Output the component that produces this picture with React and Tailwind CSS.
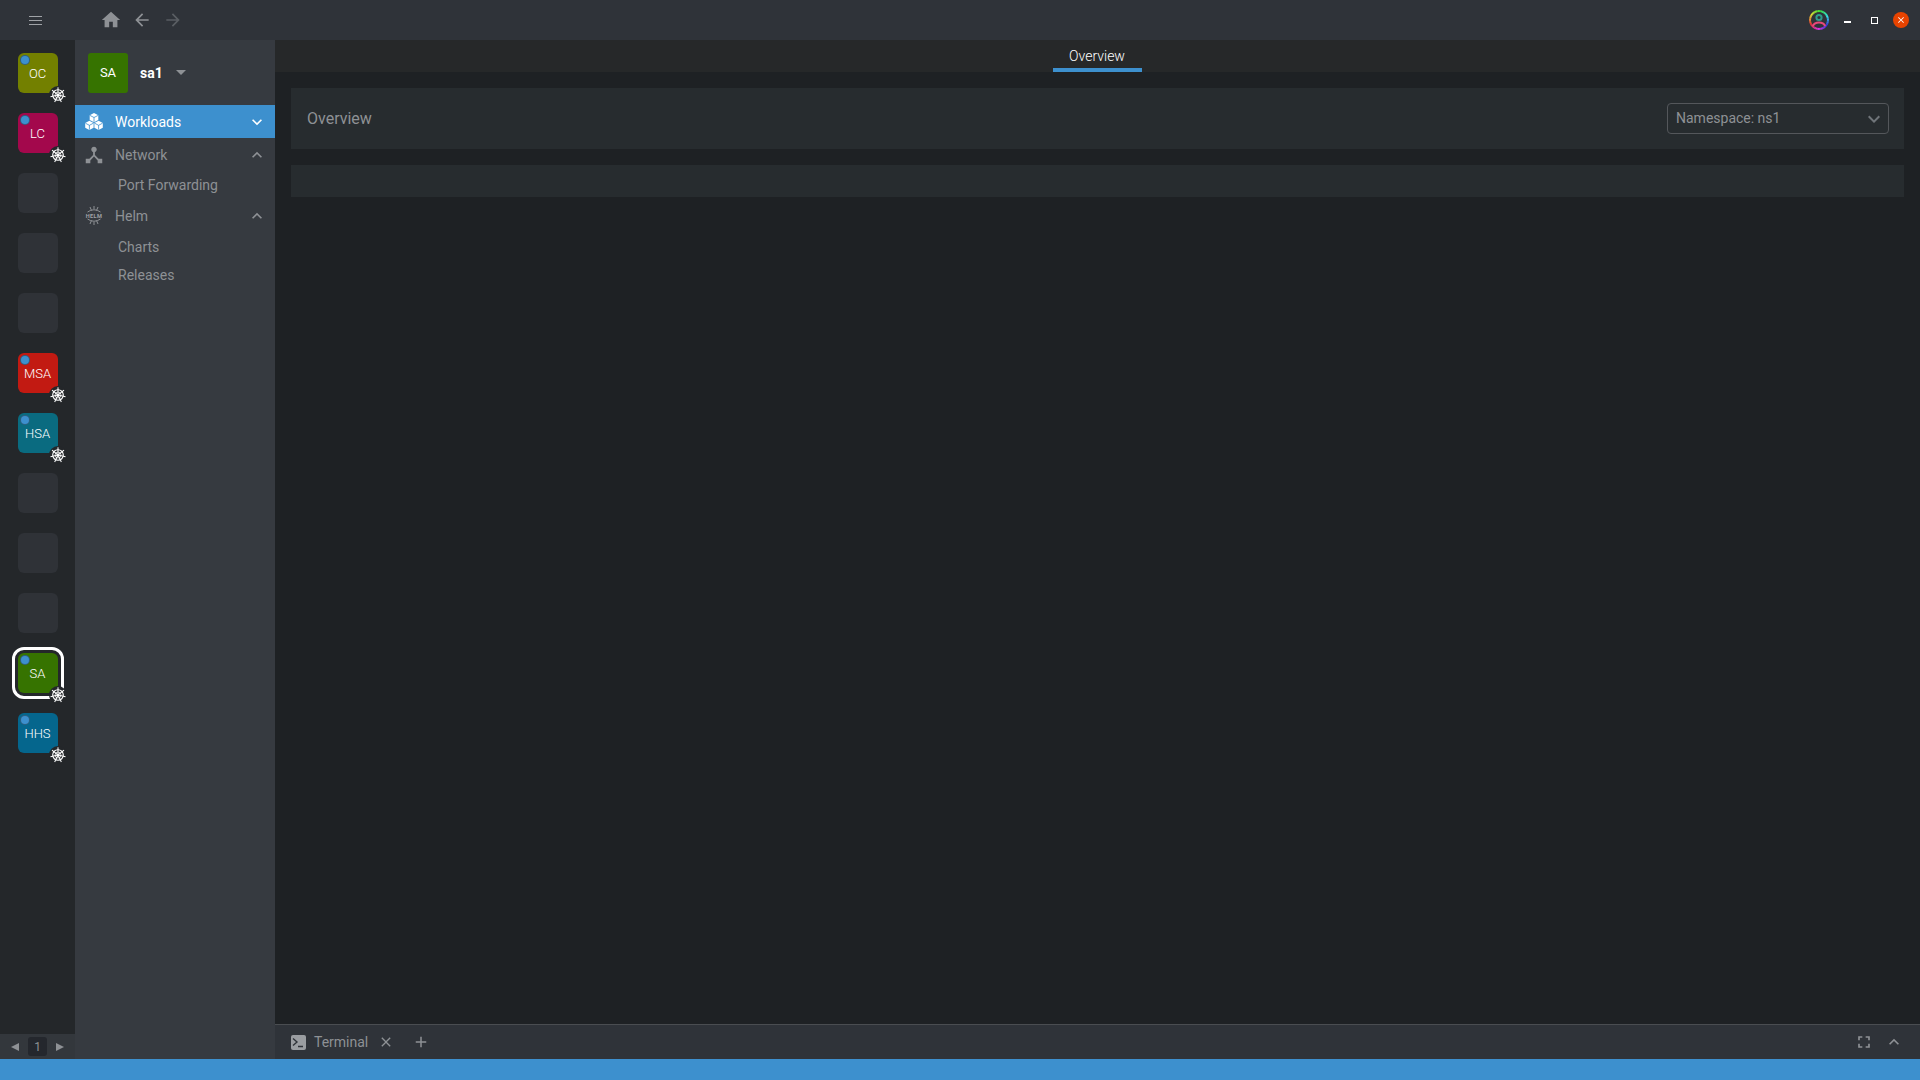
const icons = {
  home: "M10 20v-6h4v6h5v-8h3L12 3 2 12h3v8z",
  back: "M20 11H7.83l5.59-5.59L12 4l-8 8 8 8 1.41-1.41L7.83 13H20v-2z",
  forward: "M12 4l-1.41 1.41L16.17 11H4v2h12.17l-5.58 5.59L12 20l8-8z",
  more: "M16.59 8.59L12 13.17 7.41 8.59 6 10l6 6 6-6z",
  less: "M12 8l-6 6 1.41 1.41L12 10.83l4.59 4.58L18 14z",
  hub: "M17 16l-4-4V8.82C14.16 8.4 15 7.3 15 6c0-1.66-1.34-3-3-3S9 4.34 9 6c0 1.3.84 2.4 2 2.82V12l-4 4H3v5h5v-3.05l4-4.2 4 4.2V21h5v-5h-4z",
  full: "M7 14H5v5h5v-2H7v-3zm-2-4h2V7h3V5H5v5zm12 7h-3v2h5v-5h-2v3zM14 5v2h3v3h2V5h-5z",
  add: "M19 13h-6v6h-2v-6H5v-2h6V5h2v6h6v2z",
  close: "M19 6.41L17.59 5 12 10.59 6.41 5 5 6.41 10.59 12 5 17.59 6.41 19 12 13.41 17.59 19 19 17.59 13.41 12 19 6.41z",
};

function Icon({ name, className }) {
  return (
    <svg viewBox="0 0 24 24" fill="currentColor" className={className}>
      <path d={icons[name]} />
    </svg>
  );
}

function KubeIcon() {
  const spokes = [0, 51.4, 102.8, 154.2, 205.7, 257.1, 308.5];
  return (
    <svg viewBox="0 0 16 16" className="w-[16px] h-[16px]" fill="none" stroke="white">
      <circle cx="8" cy="8" r="5.3" strokeWidth="1.1" />
      <circle cx="8" cy="8" r="3" strokeWidth="0.7" />
      <circle cx="8" cy="8" r="1.1" fill="white" stroke="none" />
      {spokes.map((a) => (
        <line key={a} x1="8" y1="8" x2="8" y2="0.3" strokeWidth="1" transform={`rotate(${a} 8 8)`} />
      ))}
    </svg>
  );
}

function HotbarItem({ label, color, active }) {
  if (!label) {
    return <div className="w-[40px] h-[40px] rounded-[6px] bg-[#2f3237]" />;
  }
  return (
    <div
      className={`relative w-[40px] h-[40px] rounded-[6px] flex items-center justify-center pt-[1px] text-white text-[13px] font-light ${color} ${
        active ? "outline-[3px] outline-white outline-offset-[3px]" : ""
      }`}
    >
      <span className="absolute left-[3px] top-[3px] w-[8px] h-[8px] rounded-full bg-[#3d90ce] shadow-[0_0_0_1px_#2f5f80]" />
      {label}
      <span className="absolute right-[-9px] bottom-[-11px] w-[18px] h-[18px] rounded-full bg-[#24272a] flex items-center justify-center">
        <KubeIcon />
      </span>
    </div>
  );
}

function WorkloadsIcon() {
  return (
    <svg viewBox="0 0 18 17" className="w-[18px] h-[17px]" fill="white">
      <path d="M9 0l4.3 2.3v4.6L9 9.2 4.7 6.9V2.3z" />
      <path d="M4.4 7.8l4.2 2.3v4.6L4.4 17 .2 14.7v-4.6z" />
      <path d="M13.6 7.8l4.2 2.3v4.6L13.6 17l-4.2-2.3v-4.6z" />
      <path d="M9 4.3v4.6M4.9 2.4L9 4.5l4.1-2.1M4.4 12.1v4.6M.4 10.2l4 2.1 4-2.1M13.6 12.1v4.6M9.6 10.2l4 2.1 4-2.1" stroke="#3d90ce" strokeWidth="0.8" fill="none" />
    </svg>
  );
}

function HelmIcon() {
  return (
    <svg viewBox="0 0 20 20" className="w-[21px] h-[21px]" fill="none" stroke="#8e9195" strokeWidth="1">
      <path d="M3.5 6.5Q10 2 16.5 6.5M6 1.5l1.5 3.5M14 1.5l-1.5 3.5M10 .5v3" />
      <path d="M3.5 13.5Q10 18 16.5 13.5M6 18.5l1.5-3.5M14 18.5l-1.5-3.5M10 19.5v-3" />
      <text x="10" y="12" textAnchor="middle" fontSize="5.6" fontWeight="700" fill="#a0a3a7" stroke="none" letterSpacing="0.4" fontFamily="Roboto, sans-serif">HELM</text>
    </svg>
  );
}

function AvatarIcon() {
  const segments = Array.from({ length: 36 }, (_, i) => i * 10);
  const point = (angle) => {
    const rad = (angle * Math.PI) / 180;
    return `${10 + 9 * Math.sin(rad)} ${10 - 9 * Math.cos(rad)}`;
  };
  return (
    <svg viewBox="0 0 20 20" className="w-[20px] h-[20px]" fill="none">
      {segments.map((angle) => (
        <path
          key={angle}
          d={`M${point(angle)}L${point(angle + 11)}`}
          stroke={`hsl(${120 + angle} 75% 55%)`}
          strokeWidth="2"
        />
      ))}
      <circle cx="10" cy="7.5" r="2.6" stroke="#2f9c8c" strokeWidth="2" />
      <path d="M3.8 16q1.6-3.6 6.2-3.6t6.2 3.6" stroke="#e8487a" strokeWidth="2" />
    </svg>
  );
}

function MenuRow({ icon, label, active, chevron }) {
  return (
    <div className={`h-[33px] flex items-center pl-[9px] pr-[8px] text-[14px] ${active ? "bg-[#3d90ce] text-white" : "text-[#8e9195]"}`}>
      <span className="w-[20px] flex justify-center">{icon}</span>
      <span className="ml-[11px] flex-1 pt-[1px]">{label}</span>
      <Icon name={chevron} className="w-[20px] h-[20px]" />
    </div>
  );
}

export default function App() {
  const hotbar = [
    { label: "OC", color: "bg-[#738000]" },
    { label: "LC", color: "bg-[#a3084c]" },
    {},
    {},
    {},
    { label: "MSA", color: "bg-[#c21a12]" },
    { label: "HSA", color: "bg-[#0a6b80]" },
    {},
    {},
    {},
    { label: "SA", color: "bg-[#367300]", active: true },
    { label: "HHS", color: "bg-[#05668d]" },
  ];

  return (
    <div className="w-[1920px] h-[1080px] flex flex-col overflow-hidden bg-[#1e2124] font-['Roboto',sans-serif]">
      {/* title bar */}
      <div className="h-[40px] shrink-0 bg-[#2f3339] flex items-center text-[#8e9195]">
        <div className="w-[75px] flex justify-center">
          <div className="w-[13px] flex flex-col gap-[3px] mr-[5px]">
            <div className="h-px bg-[#a0a3a7]" />
            <div className="h-px bg-[#a0a3a7]" />
            <div className="h-px bg-[#a0a3a7]" />
          </div>
        </div>
        <div className="flex items-center ml-[25px] gap-[10px]">
          <Icon name="home" className="w-[22px] h-[22px] text-[#8e9195]" />
          <Icon name="back" className="w-[20px] h-[20px] text-[#8e9195]" />
          <Icon name="forward" className="w-[20px] h-[20px] text-[#5a5e63] ml-[1px]" />
        </div>
        <div className="flex-1" />
        <AvatarIcon />
        <div className="w-[7px] h-[2px] bg-white mt-[4px] ml-[15px]" />
        <div className="w-[7px] h-[7px] border border-white ml-[20px]" />
        <div className="w-[16px] h-[16px] rounded-full bg-[#e74300] flex items-center justify-center ml-[15px] mr-[11px]">
          <Icon name="close" className="w-[10px] h-[10px] text-white" />
        </div>
      </div>

      <div className="flex-1 flex min-h-0">
        {/* hotbar */}
        <div className="w-[75px] shrink-0 bg-[#24272a] flex flex-col">
          <div className="flex-1 flex flex-col items-center gap-[20px] pt-[13px]">
            {hotbar.map((item, index) => (
              <HotbarItem key={index} {...item} />
            ))}
          </div>
          <div className="h-[25px] bg-[#33373c] flex items-center justify-center text-[#8e9195] text-[12px]">
            <div className="w-0 h-0 border-y-[4px] border-y-transparent border-r-[8px] border-r-[#8e9195]" />
            <div className="w-[19px] h-[19px] rounded-[3px] bg-[#24272d] flex items-center justify-center mx-[9px]">1</div>
            <div className="w-0 h-0 border-y-[4px] border-y-transparent border-l-[8px] border-l-[#8e9195]" />
          </div>
        </div>

        {/* sidebar */}
        <div className="w-[200px] shrink-0 bg-[#363a40]">
          <div className="h-[65px] flex items-center pl-[13px]">
            <div className="w-[40px] h-[40px] rounded-[3px] bg-[#367300] text-white text-[13px] flex items-center justify-center pt-[1px]">SA</div>
            <span className="ml-[12px] pt-[1px] text-white text-[14px] font-bold">sa1</span>
            <div className="ml-[13px] w-0 h-0 border-x-[5px] border-x-transparent border-t-[5px] border-t-[#8e9195]" />
          </div>
          <MenuRow icon={<WorkloadsIcon />} label="Workloads" active chevron="more" />
          <MenuRow icon={<Icon name="hub" className="w-[22px] h-[22px] shrink-0" />} label="Network" chevron="less" />
          <div className="h-[28px] flex items-center pl-[43px] text-[14px] text-[#8e9195]">Port Forwarding</div>
          <MenuRow icon={<HelmIcon />} label="Helm" chevron="less" />
          <div className="h-[30px] flex items-center pl-[43px] text-[14px] text-[#8e9195]">Charts</div>
          <div className="h-[27px] flex items-center pl-[43px] text-[14px] text-[#8e9195]">Releases</div>
        </div>

        {/* main */}
        <div className="flex-1 flex flex-col min-w-0">
          <div className="h-[32px] shrink-0 bg-[#262829] flex justify-center">
            <div className="w-[89px] border-b-4 border-[#3d90ce] text-white text-[14px] font-light flex items-center justify-center pt-[4px] ml-[-1px]">Overview</div>
          </div>
          <div className="flex-1 bg-[#1e2124] p-[16px] flex flex-col gap-[16px]">
            <div className="h-[61px] bg-[#272c2f] flex items-center justify-between pl-[16px] pr-[15px]">
              <span className="text-[#8e9195] text-[16px]">Overview</span>
              <div className="w-[222px] h-[31px] border border-[#54575b] rounded-[4px] flex items-center justify-between pl-[8px] pr-[2px] text-[14px] text-[#8e9195]">
                Namespace: ns1
                <Icon name="more" className="w-[24px] h-[24px] text-[#70757a]" />
              </div>
            </div>
            <div className="h-[32px] bg-[#272c2f]" />
          </div>
          <div className="h-[35px] shrink-0 bg-[#2f3339] border-t border-[#4a4d51] flex items-center pl-[16px] pr-[16px] text-[#8e9195] text-[14px]">
            <div className="w-[15px] h-[15px] rounded-[2px] bg-[#9a9da1] flex items-center justify-center">
              <svg viewBox="0 0 15 15" className="w-[15px] h-[15px]" fill="none" stroke="#2f3339" strokeWidth="1.4">
                <path d="M2 3.5L6 7 2 10.5M7 11.5h5" />
              </svg>
            </div>
            <span className="ml-[8px]">Terminal</span>
            <Icon name="close" className="w-[16px] h-[16px] ml-[10px]" />
            <Icon name="add" className="w-[18px] h-[18px] ml-[18px]" />
            <div className="flex-1" />
            <Icon name="full" className="w-[20px] h-[20px]" />
            <Icon name="less" className="w-[20px] h-[20px] ml-[10px]" />
          </div>
        </div>
      </div>

      {/* status bar */}
      <div className="h-[21px] shrink-0 bg-[#3d90ce]" />
    </div>
  );
}
